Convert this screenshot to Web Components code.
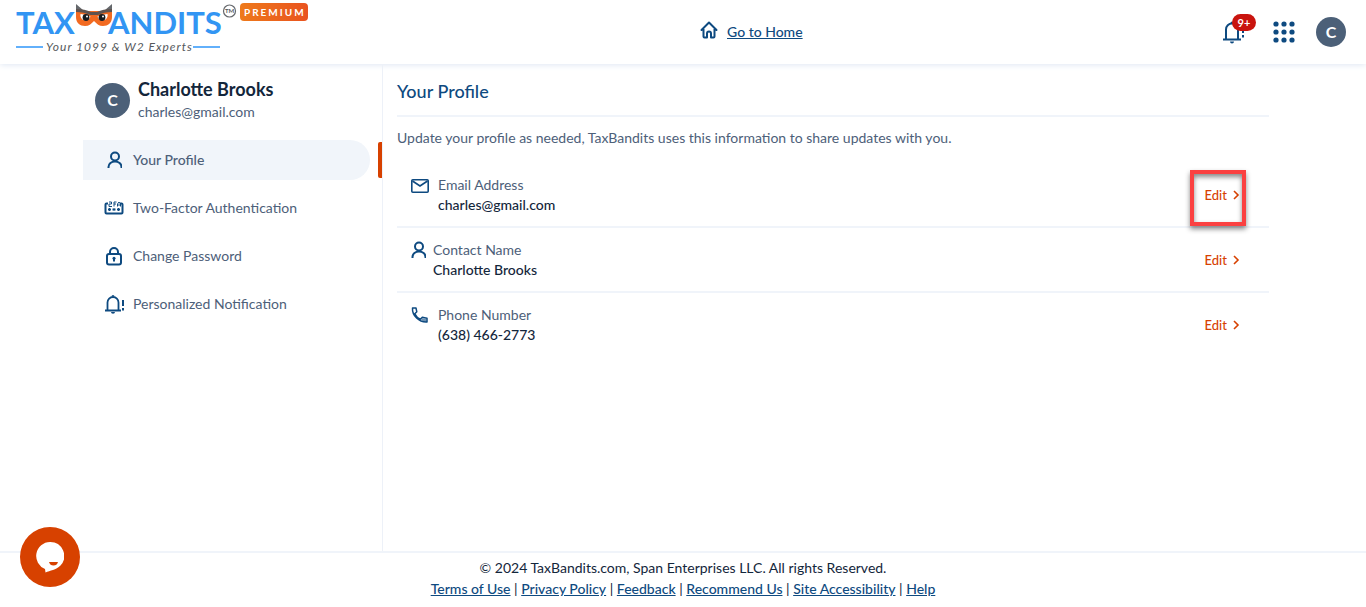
<!DOCTYPE html>
<html lang="en">
<head>
<meta charset="utf-8">
<meta name="viewport" content="width=device-width, initial-scale=1">
<title>Your Profile - TaxBandits</title>
<style>
  :root {
    --navy: #0e4a80;
    --slate: #4d6079;
    --ink: #13263b;
    --orange: #d74100;
    --line: #f0f4fa;
  }
  body {
    margin: 0;
    font: 14px/20px Lato, "Liberation Sans", sans-serif;
    color: var(--ink);
    background: #fff;
  }
</style>
</head>
<body>
<profile-page></profile-page>

<script>
const define = (name, html, setup) => {
  const template = document.createElement('template');
  template.innerHTML = html;
  customElements.define(name, class extends HTMLElement {
    constructor() {
      super();
      this.attachShadow({ mode: 'open' }).append(template.content.cloneNode(true));
    }
    connectedCallback() {
      if (setup) setup(this, this.shadowRoot);
    }
  });
};

const icons = {
  home: [18, 18, '<path d="M1.500 9 9 1.500 16.500 9M3.500 8v7.500a1 1 0 0 0 1 1H7v-4a2 2 0 0 1 4 0v4h2.500a1 1 0 0 0 1-1V8" stroke-linecap="round" stroke-linejoin="round"/>'],
  user: [16, 18, '<circle cx="9" cy="5.500" r="4"/><path d="M2.500 17v-1a6.500 5.500 0 0 1 13 0v1"/>'],
  mail: [21, 18, '<g stroke-width="1.600"><rect x="1.800" y="3.800" width="16.400" height="12.400" rx="1"/><path d="m2.500 5 7.500 5 7.500-5"/></g>'],
  phone: [21, 18, '<path d="M2.500 2H6l.8 3.800-2 2c1.300 2.600 3 4.300 5.500 5.500l2-2 4.700 1V16C9 16.500 2 9.500 2.500 2z" stroke-width="1.500" stroke-linejoin="round"/><path d="m11 13.800 1.500-1.500 4 1V16q-3 0-5.500-2.200z" fill="currentColor" fill-opacity=".6" stroke="none"/>'],
  lock: [18, 20, '<rect x="2" y="8" width="14" height="10.500" rx="2"/><path d="M5 8V6a4 4 0 0 1 8 0v2M9 12.500v3"/><circle cx="9" cy="12.300" r="1.500" fill="currentColor" stroke="none"/>'],
  bell: [22, 22, '<path d="M2 17.500h16M4.500 17V9.500a5.500 5.500 0 0 1 11 0V17" stroke-width="1.800"/><path d="M8.500 3.500a1.500 1.500 0 0 1 3 0zM8 19h4a2 1.800 0 0 1-4 0z" fill="currentColor" stroke-width="0"/><path d="M20 7v6M20 15v2.500"/>'],
  alarm: [24, 26, '<path d="M1 20.500h18M4 20V10.500a6 6 0 0 1 12 0V20" stroke-width="2"/><path d="M8.500 4a1.500 1.500 0 0 1 3 0zM8 22.500h4a2 2 0 0 1-4 0z" fill="currentColor" stroke-width="0"/><path d="M21 9v5M21 16v2.500"/>'],
  factor: [20, 14, '<path d="M4 2.500H2.500a1 1 0 0 0-1 1v8a1 1 0 0 0 1 1h15a1 1 0 0 0 1-1v-8a1 1 0 0 0-1-1H16"/><path d="M5 1h2.500v2H5v2.500h3M10 5.500V1h2.500M10 3h2M13.500 5.500V3L15 1l1.500 2v2.500M13.500 4h3" stroke-width="1"/><path d="M4 8.500h3M5.500 7v3M4.500 7.500l2 2M6.500 7.500l-2 2M8.500 8.500h3M10 7v3M9 7.500l2 2M11 7.500l-2 2M13 8.500h3M14.500 7v3M13.500 7.500l2 2M15.500 7.500l-2 2" stroke-width="1"/>'],
  chevron: [7, 10, '<path d="m1 1 4 4-4 4" stroke-width="1.600"/>'],
  grid: [22, 22, [3, 11, 19].map(y => [3, 11, 19].map(x => `<circle cx="${x}" cy="${y}" r="2.600" fill="currentColor" stroke="none"/>`).join('')).join('')]
};

define('tb-icon', `
  <style>
    :host { display: inline-flex; flex: none; color: var(--navy); }
    svg { display: block; fill: none; stroke: currentColor; stroke-width: 2; }
  </style>
  <svg aria-hidden="true"></svg>`,
  (host, root) => {
    const icon = icons[host.getAttribute('name')];
    if (!icon) return;
    const [w, h, shape] = icon;
    const svg = root.querySelector('svg');
    svg.setAttribute('width', w);
    svg.setAttribute('height', h);
    svg.setAttribute('viewBox', `0 0 ${w} ${h}`);
    svg.innerHTML = shape;
  });

const placeIcon = (host, root) => {
  const icon = document.createElement('tb-icon');
  icon.setAttribute('name', host.getAttribute('icon'));
  root.querySelector('.icon').replaceChildren(icon);
};

define('user-avatar', `
  <style>
    :host { display: flex; flex: none; align-items: center; justify-content: center; width: 30px; height: 30px; border-radius: 50%; background: #4c6078; color: #fff; font-weight: 700; font-size: 16px; }
    :host([large]) { width: 35px; height: 35px; }
  </style>
  <slot></slot>`);

define('brand-logo', `
  <style>
    :host { display: flex; align-items: flex-start; gap: 3px; }
    a { display: block; }
    svg { display: block; }
    .name { font: 700 31px Lato, sans-serif; fill: #3295f3; }
    .tag { font: italic 12px Lato, sans-serif; fill: #55585c; letter-spacing: 1px; }
    .tm { font: 700 6px Lato, sans-serif; fill: #55585c; }
    .badge { margin-top: 3px; padding: 0 2px 0 4px; border-radius: 4px; background: linear-gradient(90deg, #ee7a1b, #e9531f); color: #fff; font-size: 10px; font-weight: 700; line-height: 18px; letter-spacing: 2px; }
  </style>
  <a href="#" aria-label="TaxBandits home">
    <svg width="221" height="56" viewBox="0 0 221 56">
      <text class="name" x="0" y="34">TAX</text>
      <text class="name" x="92" y="34">ANDITS</text>
      <path d="M60 10V4l7 6zM96 10V4l-7 6z" fill="#65686c"/>
      <path d="M60 11h36v6c0 6-4 9-9 9-4 0-6-2-9-5-3 3-5 5-9 5-5 0-9-3-9-9z" fill="#f26a21"/>
      <path d="M60 9q9 0 15 3h6q6-3 15-3v3q-8 0-14 3h-8q-6-3-14-3z" fill="#5e5350"/>
      <path d="M64.500 14q5 0 10 2.500a5 5 0 1 1-10-2.500zM91.500 14q-5 0-10 2.500a5 5 0 1 0 10-2.500z" fill="#fff"/>
      <circle cx="70" cy="17.500" r="3.400" fill="#171a1e"/><circle cx="86" cy="17.500" r="3.400" fill="#171a1e"/>
      <circle cx="71" cy="16.500" r="1" fill="#fff"/><circle cx="87" cy="16.500" r="1" fill="#fff"/>
      <path d="M0 47h27M177 47h27" stroke="#62b0fb" stroke-width="2"/>
      <text class="tag" x="30" y="51">Your 1099 &amp; W2 Experts</text>
      <circle cx="213.500" cy="11" r="6" fill="none" stroke="#65686c" stroke-width="1.200"/>
      <text class="tm" x="209" y="13">TM</text>
    </svg>
  </a>
  <span class="badge">PREMIUM</span>`);

define('app-header', `
  <style>
    :host { display: grid; grid-template-columns: 50% auto 1fr; column-gap: 19px; align-items: center; height: 64px; padding: 0 20px 0 16px; background: #fff; box-shadow: 0 1px 6px #dfe7f3; }
    brand-logo { align-self: start; }
    .home { display: flex; align-items: center; gap: 9px; color: var(--navy); font-weight: 500; }
    .home tb-icon { margin-top: -4px; }
    .tools { display: flex; justify-content: flex-end; align-items: center; gap: 21px; }
    button { display: flex; position: relative; padding: 0; border: 0; background: none; font: inherit; }
    .bell { margin-right: 6px; }
    .count { position: absolute; top: -5px; left: 10px; width: 24px; border-radius: 9px; background: #c9140e; color: #fff; font-size: 11px; font-weight: 700; line-height: 17px; text-align: center; }
  </style>
  <brand-logo></brand-logo>
  <a class="home" href="#"><tb-icon name="home"></tb-icon>Go to Home</a>
  <div class="tools">
    <button class="bell" aria-label="Notifications"><tb-icon name="alarm"></tb-icon><span class="count">9+</span></button>
    <button aria-label="Apps"><tb-icon name="grid"></tb-icon></button>
    <user-avatar>C</user-avatar>
  </div>`);

define('nav-item', `
  <style>
    :host { display: flex; align-items: center; height: 40px; }
    a { display: flex; flex: 1; align-items: center; gap: 8px; height: 40px; padding-left: 20px; margin-right: 12px; border-radius: 0 20px 20px 0; color: var(--slate); text-decoration: none; }
    .icon { display: flex; justify-content: center; width: 22px; }
    .mark { display: none; width: 4px; height: 36px; border-radius: 2px 0 0 2px; background: var(--orange); }
    :host([current]) a { margin-right: 8px; background: #f1f5fa; font-weight: 500; }
    :host([current]) .mark { display: block; }
  </style>
  <a href="#"><span class="icon"></span><slot></slot></a>
  <span class="mark"></span>`, placeIcon);

define('side-nav', `
  <style>
    :host { display: block; border-right: 1px solid #edf1f8; padding-top: 14px; }
    .who { display: flex; align-items: center; gap: 8px; height: 44px; padding-left: 12px; margin-bottom: 18px; }
    .name { font-size: 18px; font-weight: 700; line-height: 24px; }
    .mail { line-height: 22px; color: var(--slate); }
    nav { display: grid; gap: 8px; }
  </style>
  <div class="who">
    <user-avatar large>C</user-avatar>
    <div><div class="name">Charlotte Brooks</div><div class="mail">charles@gmail.com</div></div>
  </div>
  <nav aria-label="Account">
    <nav-item icon="user" current>Your Profile</nav-item>
    <nav-item icon="factor">Two-Factor Authentication</nav-item>
    <nav-item icon="lock">Change Password</nav-item>
    <nav-item icon="bell">Personalized Notification</nav-item>
  </nav>`);

define('profile-row', `
  <style>
    :host { display: flex; padding: 12px 29px 11px 13px; border-bottom: 2px solid var(--line); }
    :host(:last-of-type) { border-bottom-color: transparent; }
    .icon { flex: none; display: flex; margin: 1px 7px 0 0; }
    .text { flex: 1; }
    .label { color: var(--slate); }
    .value { font-weight: 500; }
    .action { position: relative; display: flex; align-items: center; }
    button { display: flex; align-items: center; gap: 6px; padding: 0; border: 0; background: none; color: var(--orange); font: inherit; font-size: 13px; font-weight: 500; }
    button tb-icon { color: inherit; }
    :host([highlight]) .action::after { content: ""; position: absolute; inset: -5px -6px -11px -15px; border: 4px solid #fb4141; box-shadow: 0 3px 5px #0007, inset 0 3px 5px #0007; pointer-events: none; }
  </style>
  <span class="icon"></span>
  <div class="text"><div class="label"><slot name="label"></slot></div><div class="value"><slot></slot></div></div>
  <div class="action"><button>Edit<tb-icon name="chevron"></tb-icon></button></div>`, placeIcon);

define('profile-panel', `
  <style>
    :host { display: block; padding: 0 14px; }
    h1 { margin: 0 0 11px; padding: 15px 0 12px; border-bottom: 2px solid var(--line); color: var(--navy); font-size: 18px; font-weight: 500; line-height: 24px; }
    p { margin: 0 0 15px; color: var(--slate); }
  </style>
  <h1>Your Profile</h1>
  <p>Update your profile as needed, TaxBandits uses this information to share updates with you.</p>
  <profile-row icon="mail" highlight><span slot="label">Email Address</span>charles@gmail.com</profile-row>
  <profile-row icon="user"><span slot="label">Contact Name</span>Charlotte Brooks</profile-row>
  <profile-row icon="phone"><span slot="label">Phone Number</span>(638) 466-2773</profile-row>`);

define('site-footer', `
  <style>
    :host { display: block; padding: 4px 0 8px; border-top: 2px solid var(--line); text-align: center; line-height: 21px; }
    a { color: var(--navy); font-weight: 500; }
  </style>
  <div>© 2024 TaxBandits.com, Span Enterprises LLC. All rights Reserved.</div>
  <div><a href="#">Terms of Use</a> | <a href="#">Privacy Policy</a> | <a href="#">Feedback</a> | <a href="#">Recommend Us</a> | <a href="#">Site Accessibility</a> | <a href="#">Help</a></div>`);

define('chat-launcher', `
  <style>
    :host { position: fixed; left: 20px; bottom: 20px; }
    button { display: flex; align-items: center; justify-content: center; width: 60px; height: 60px; padding: 0; border: 0; border-radius: 50%; background: var(--orange); }
    svg { display: block; }
  </style>
  <button aria-label="Open chat">
    <svg width="28" height="32" viewBox="0 0 28 32" aria-hidden="true">
      <path d="M14 1a14 14 0 0 1 10.500 23.500C20 29 14 29.500 9.500 31.500L9 28A14 14 0 0 1 14 1z" fill="#fff"/>
      <path d="M13 21h9q-1 3.500-4.500 3.500T13 21z" fill="#d74100"/>
    </svg>
  </button>`);

define('profile-page', `
  <style>
    :host { display: flex; flex-direction: column; min-height: 100vh; }
    main { flex: 1; display: grid; grid-template-columns: 300px minmax(0, 1fr); width: 100%; max-width: 1200px; margin: 0 auto; }
  </style>
  <app-header></app-header>
  <main><side-nav></side-nav><profile-panel></profile-panel></main>
  <site-footer></site-footer>
  <chat-launcher></chat-launcher>`);
</script>
</body>
</html>
